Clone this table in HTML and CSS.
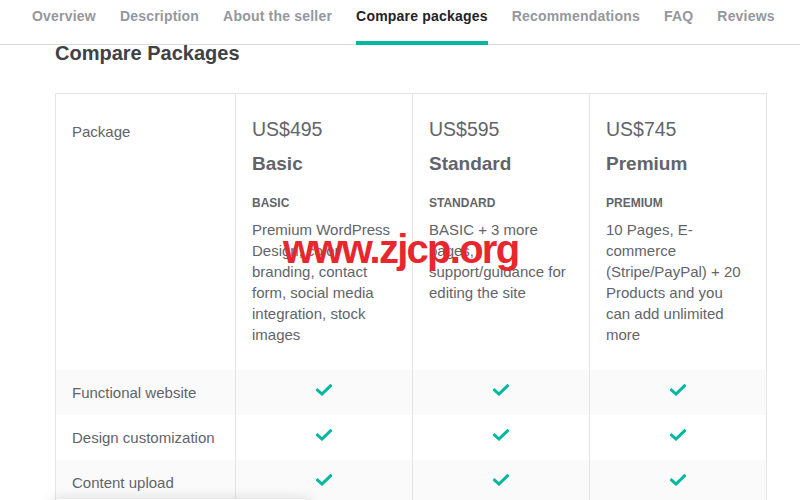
FILE: index.html
```html
<!DOCTYPE html>
<html>
<head>
<meta charset="utf-8">
<link rel="stylesheet" href="styles.css">
</head>
<body>
<nav class="tabs">
  <span class="tab">Overview</span>
  <span class="tab">Description</span>
  <span class="tab">About the seller</span>
  <span class="tab active">Compare packages</span>
  <span class="tab">Recommendations</span>
  <span class="tab">FAQ</span>
  <span class="tab">Reviews</span>
</nav>
<main class="content">
  <h2 class="title">Compare Packages</h2>
  <table class="compare">
    <colgroup>
      <col class="c-label"><col class="c-pkg"><col class="c-pkg"><col class="c-pkg">
    </colgroup>
    <tr class="head">
      <td class="label top">Package</td>
      <td class="pkg">
        <div class="price">US$495</div>
        <div class="name">Basic</div>
        <div class="kind">BASIC</div>
        <div class="desc">Premium WordPress Design, color branding, contact form, social media integration, stock images</div>
      </td>
      <td class="pkg">
        <div class="price">US$595</div>
        <div class="name">Standard</div>
        <div class="kind">STANDARD</div>
        <div class="desc">BASIC + 3 more pages, support/guidance for editing the site</div>
      </td>
      <td class="pkg">
        <div class="price">US$745</div>
        <div class="name">Premium</div>
        <div class="kind">PREMIUM</div>
        <div class="desc">10 Pages, E-commerce (Stripe/PayPal) + 20 Products and you can add unlimited more</div>
      </td>
    </tr>
    <tr class="row alt">
      <td class="label">Functional website</td>
      <td class="chk"><svg class="check" viewBox="0 0 16 12"><polyline points="1.5,6 6,10 14.5,1.8"/></svg></td>
      <td class="chk"><svg class="check" viewBox="0 0 16 12"><polyline points="1.5,6 6,10 14.5,1.8"/></svg></td>
      <td class="chk"><svg class="check" viewBox="0 0 16 12"><polyline points="1.5,6 6,10 14.5,1.8"/></svg></td>
    </tr>
    <tr class="row">
      <td class="label">Design customization</td>
      <td class="chk"><svg class="check" viewBox="0 0 16 12"><polyline points="1.5,6 6,10 14.5,1.8"/></svg></td>
      <td class="chk"><svg class="check" viewBox="0 0 16 12"><polyline points="1.5,6 6,10 14.5,1.8"/></svg></td>
      <td class="chk"><svg class="check" viewBox="0 0 16 12"><polyline points="1.5,6 6,10 14.5,1.8"/></svg></td>
    </tr>
    <tr class="row alt">
      <td class="label">Content upload</td>
      <td class="chk"><svg class="check" viewBox="0 0 16 12"><polyline points="1.5,6 6,10 14.5,1.8"/></svg></td>
      <td class="chk"><svg class="check" viewBox="0 0 16 12"><polyline points="1.5,6 6,10 14.5,1.8"/></svg></td>
      <td class="chk"><svg class="check" viewBox="0 0 16 12"><polyline points="1.5,6 6,10 14.5,1.8"/></svg></td>
    </tr>
  </table>
  <div class="watermark">www.zjcp.org</div>
</main>
<div class="floating"></div>
</body>
</html>
```

FILE: styles.css
```css
html, body {
  margin: 0;
  padding: 0;
  background: #fff;
  overflow: hidden;
  height: 500px;
}
body {
  font-family: "Liberation Sans", Arial, sans-serif;
  color: #62646a;
  position: relative;
}
.tabs {
  display: flex;
  gap: 24px;
  padding-left: 32px;
  height: 44px;
  border-bottom: 1px solid #dadbdd;
}
.tab {
  box-sizing: border-box;
  height: 45px;
  padding-top: 8px;
  margin-bottom: -1px;
  font-size: 14px;
  font-weight: 700;
  line-height: 17px;
  letter-spacing: 0.2px;
  color: #95979d;
  white-space: nowrap;
}
.tab.active {
  color: #222325;
  border-bottom: 4px solid #00b8a0;
}
.content {
  padding-left: 55px;
}
.title {
  margin: 0;
  font-size: 20px;
  line-height: 16px;
  font-weight: 700;
  color: #404145;
}
.compare {
  margin-top: 32px;
  border-collapse: collapse;
  table-layout: fixed;
  width: 712px;
  border-top: 1px solid #e4e5e7;
}
.c-label { width: 180px; }
.c-pkg { width: 177px; }
.compare td {
  border-left: 1px solid #e4e5e7;
  border-right: 1px solid #e4e5e7;
  padding: 0 16px;
  vertical-align: top;
}
.label {
  font-size: 15px;
  line-height: 20px;
  color: #62646a;
}
.label.top {
  padding-top: 28px;
}
.pkg {
  padding-top: 23px !important;
  padding-bottom: 25px !important;
}
.price {
  font-size: 19.5px;
  line-height: 24px;
  color: #62646a;
}
.name {
  margin-top: 11px;
  font-size: 19px;
  line-height: 24px;
  font-weight: 700;
  color: #62646a;
}
.kind {
  margin-top: 19px;
  font-size: 12px;
  line-height: 16px;
  font-weight: 700;
  color: #62646a;
}
.desc {
  margin-top: 8px;
  font-size: 15px;
  line-height: 21px;
  color: #62646a;
}
.row td {
  height: 45px;
  vertical-align: middle;
}
.row.alt td {
  background: #fafafa;
}
.chk {
  text-align: center;
}
.check {
  display: inline-block;
  width: 16px;
  height: 12px;
  vertical-align: middle;
  margin-top: -7px;
  fill: none;
  stroke: #00b8a0;
  stroke-width: 3;
  stroke-linecap: square;
  stroke-linejoin: miter;
}
.watermark {
  position: absolute;
  left: 283px;
  top: 229px;
  font-family: "Liberation Sans", Arial, sans-serif;
  font-size: 40px;
  line-height: 40px;
  font-weight: 700;
  letter-spacing: -1.75px;
  color: #e8262e;
  white-space: nowrap;
}
.floating {
  position: absolute;
  left: 50px;
  top: 499px;
  width: 262px;
  height: 40px;
  background: #fff;
  border-radius: 10px;
  box-shadow: 0 0 14px rgba(0, 0, 0, 0.14);
}
```
